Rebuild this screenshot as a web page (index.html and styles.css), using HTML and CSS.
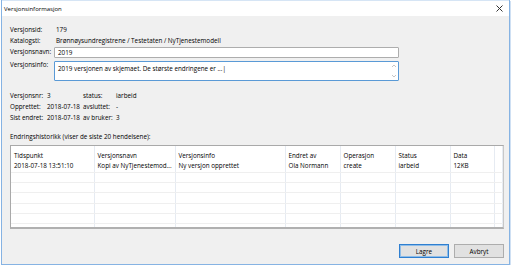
FILE: index.html
```html
<!DOCTYPE html>
<html lang="no">
<head>
    <meta charset="UTF-8">
    <title>Versjonsinformasjon</title>
    <link rel="stylesheet" href="styles.css">
</head>
<body>
<div class="window">
    <!-- Tittellinje -->
    <div class="titlebar">
        <span class="title">Versjonsinformasjon</span>
        <svg class="close" width="7" height="7" viewBox="0 0 7 7"><path d="M0.5 0.5 L6.5 6.5 M6.5 0.5 L0.5 6.5" stroke="#333" stroke-width="1"/></svg>
    </div>

    <div class="body">
        <!-- Hovedinfo -->
        <div class="info">
            <div class="label">Versjonsid:</div>
            <div class="value">179</div>
            <div class="label">Katalogsti:</div>
            <div class="value">Brønnøysundregistrene / Testetaten / NyTjenestemodell</div>
            <div class="label">Versjonsnavn:</div>
            <div class="field">2019</div>
            <div class="label label-top">Versjonsinfo:</div>
            <div class="field area">2019 versjonen av skjemaet. De største endringene er ...|
                <svg class="arrows" width="6" height="16" viewBox="0 0 6 16"><path d="M1 4 L3 2 L5 4 M1 12 L3 14 L5 12" stroke="#b8b8b8" fill="none" stroke-width="0.8"/></svg>
            </div>
        </div>

        <!-- Status -->
        <div class="meta">
            <div>Versjonsnr:</div><div>3</div><div>status:</div><div>iarbeid</div>
            <div>Opprettet:</div><div>2018-07-18</div><div>avsluttet:</div><div>-</div>
            <div>Sist endret:</div><div>2018-07-18</div><div>av bruker:</div><div>3</div>
        </div>

        <p class="caption">Endringshistorikk (viser de siste 20 hendelsene):</p>

        <!-- Historikk -->
        <div class="grid-wrap">
            <table class="history">
                <colgroup>
                    <col style="width:83px"><col style="width:81px"><col style="width:110px">
                    <col style="width:55px"><col style="width:55px"><col style="width:55px">
                    <col style="width:44px"><col>
                </colgroup>
                <thead>
                    <tr>
                        <th>Tidspunkt</th><th>Versjonsnavn</th><th>Versjonsinfo</th><th>Endret av</th>
                        <th>Operasjon</th><th>Status</th><th>Data</th><th></th>
                    </tr>
                </thead>
                <tbody>
                    <tr>
                        <td>2018-07-18 13:51:10</td><td>Kopi av NyTjenestemod...</td><td>Ny versjon opprettet</td>
                        <td>Ola Normann</td><td>create</td><td>iarbeid</td><td>12KB</td><td></td>
                    </tr>
                    <tr class="empty"><td></td><td></td><td></td><td></td><td></td><td></td><td></td><td></td></tr>
                    <tr class="empty"><td></td><td></td><td></td><td></td><td></td><td></td><td></td><td></td></tr>
                    <tr class="empty"><td></td><td></td><td></td><td></td><td></td><td></td><td></td><td></td></tr>
                    <tr class="empty"><td></td><td></td><td></td><td></td><td></td><td></td><td></td><td></td></tr>
                    <tr class="empty"><td></td><td></td><td></td><td></td><td></td><td></td><td></td><td></td></tr>
                    <tr class="empty"><td></td><td></td><td></td><td></td><td></td><td></td><td></td><td></td></tr>
                </tbody>
            </table>
        </div>

        <!-- Knapper -->
        <div class="buttons">
            <button class="btn btn-default">Lagre</button>
            <button class="btn">Avbryt</button>
        </div>
    </div>
</div>
</body>
</html>
```

FILE: styles.css
```css
* {
    margin: 0;
    padding: 0;
    box-sizing: border-box;
}

body {
    background: #fff;
    font-family: "Open Sans", "Noto Sans", sans-serif;
    font-size: 6.3px;
    color: #000;
}

/* Vindu */
.window {
    width: 509px;
    height: 265px;
    margin-left: 1px;
    border: 1px solid #86b3e3;
    border-top: none;
    background: #f0f0f0;
    display: flex;
    flex-direction: column;
    box-shadow: 1px 1px 0 #cfe0f3;
}

.titlebar {
    height: 16px;
    background: #fff;
    display: flex;
    align-items: center;
    justify-content: space-between;
    padding: 0 6px 0 2px;
    border-top: 1px solid #d6e5f5;
}

.title {
    font-size: 6px;
}

.close {
    display: block;
}

.body {
    flex: 1;
    display: flex;
    flex-direction: column;
    padding: 8px 7px 0 8px;
    position: relative;
}

/* Hovedinfo */
.info {
    display: grid;
    grid-template-columns: 44px 345px;
    line-height: 11px;
}

.label-top {
    line-height: 11px;
    margin-top: 1px;
}

.value {
    padding-left: 2px;
}

.field {
    background: #fff;
    border: 1px solid #adadad;
    border-radius: 1px;
    height: 11px;
    line-height: 9px;
    padding-left: 3px;
    margin-top: 1px;
}

.area {
    height: 20px;
    margin-top: 3px;
    padding-top: 2px;
    border-color: #5a9ad6;
    position: relative;
}

.arrows {
    position: absolute;
    right: 1px;
    top: 1px;
}

/* Status */
.meta {
    display: grid;
    grid-template-columns: 37px 36px 33px 1fr;
    line-height: 11px;
    margin-top: 9px;
}

.caption {
    line-height: 11px;
    margin-top: 8px;
}

/* Historikk */
.grid-wrap {
    margin-top: 3px;
    width: 494px;
    height: 84px;
    background: #fff;
    border: 1px solid #a9a9a9;
    border-right-color: #c8c8c8;
    border-bottom: 2px solid #b0b0b0;
    overflow: hidden;
}

.history {
    width: 100%;
    table-layout: fixed;
    border-collapse: collapse;
}

.history th,
.history td {
    text-align: left;
    font-weight: normal;
    padding: 0 0 0 3px;
    white-space: nowrap;
    overflow: hidden;
    border-right: 1px solid #e6ebf2;
}

.history th {
    height: 15px;
    line-height: 11px;
    padding-top: 4px;
}

.history td {
    height: 11px;
    line-height: 10px;
    border-bottom: 1px solid #efefef;
}

.history tr.empty td {
    height: 10.4px;
}

/* Knapper */
.buttons {
    display: flex;
    justify-content: flex-end;
    gap: 5px;
    margin-top: 15px;
    width: 494px;
}

.btn {
    width: 50px;
    height: 14px;
    font-family: inherit;
    font-size: 6.3px;
    color: #000;
    background: #e1e1e1;
    border: 1px solid #adadad;
}

.btn-default {
    border: 1px solid #2f7fd0;
    box-shadow: inset 0 0 0 1px #8fbde8;
}
```
